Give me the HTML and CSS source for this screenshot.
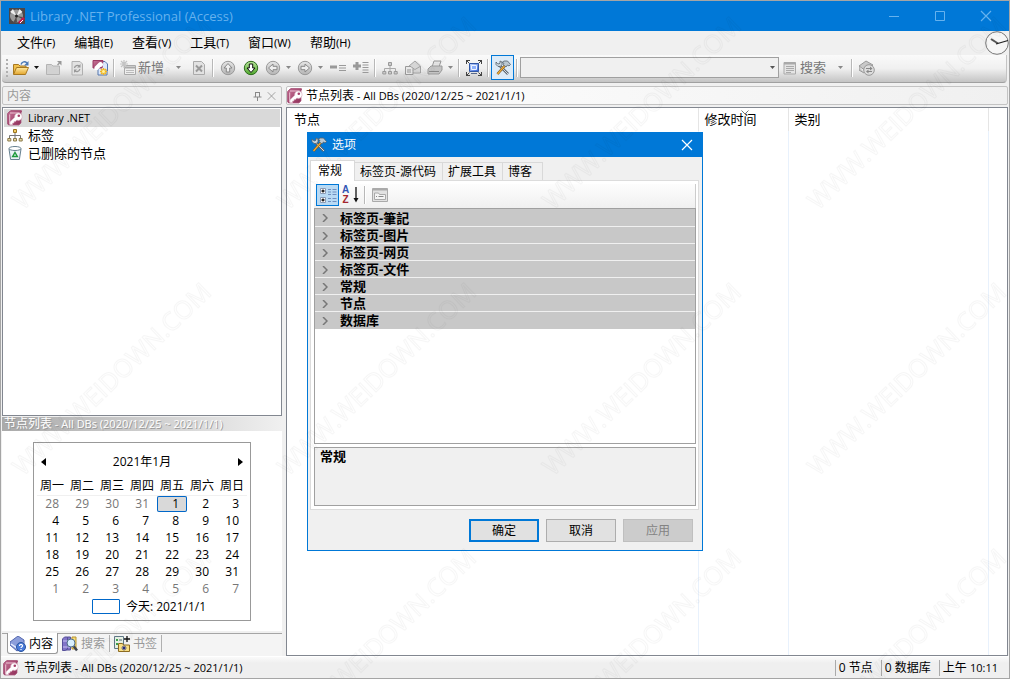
FILE: index.html
```html
<!DOCTYPE html>
<html lang="zh-CN">
<head>
<meta charset="utf-8">
<title>Library .NET Professional (Access)</title>
<link rel="stylesheet" href="styles.css">
</head>
<body>
<svg class="defs" aria-hidden="true">
  <defs>
    <linearGradient id="gold" x1="0" y1="0" x2="0" y2="1"><stop offset="0" stop-color="#ffe9a0"/><stop offset="1" stop-color="#e3a52c"/></linearGradient>
    <linearGradient id="plum" x1="0" y1="0" x2="1" y2="1"><stop offset="0" stop-color="#c9769a"/><stop offset="1" stop-color="#8d2c55"/></linearGradient>
    <linearGradient id="ball" x1="0" y1="0" x2="0" y2="1"><stop offset="0" stop-color="#e6e6e6"/><stop offset="1" stop-color="#b4b4b4"/></linearGradient>
    <linearGradient id="leaf" x1="0" y1="0" x2="0" y2="1"><stop offset="0" stop-color="#b9e59b"/><stop offset="1" stop-color="#4da62a"/></linearGradient>
    <linearGradient id="blue" x1="0" y1="0" x2="1" y2="1"><stop offset="0" stop-color="#c9dcff"/><stop offset="1" stop-color="#2f5fd8"/></linearGradient>
    <symbol id="i-key" viewBox="0 0 16 16">
      <path d="M3.500.800h11L13.800 3v10l-2 1.800H1.500L.8 14V3.500z" fill="url(#plum)" stroke="#9a3a64"/>
      <path d="M2.700 4.500V14M3 3h9.500" stroke="#e9c3d2"/>
      <path d="M11 3a3.700 3.700 0 1 1-1.200 7L8.500 11.500H7V13H5.500v1.800H2.800l.2-3 4.700-4.500A3.700 3.700 0 0 1 11 3z" fill="#fff" stroke="#d9aebf" stroke-width=".6"/>
      <circle cx="11.800" cy="5.800" r="1.300" fill="#a33d68"/>
    </symbol>
    <symbol id="i-tree" viewBox="0 0 16 16">
      <path d="M8 5v4M2.500 12V8.500h11V12M8 8v4" fill="none" stroke="#777"/>
      <path d="M6.500 2.500h3v3h-3z" fill="#f4cf63" stroke="#9a7420"/>
      <path d="M.8 11.500h3v2.500h-3zM6.500 11.500h3v2.500h-3zM12.200 11.500h3v2.500h-3z" fill="#e9dba8" stroke="#8a7a4a"/>
    </symbol>
    <symbol id="i-treegray" viewBox="0 0 16 16">
      <path d="M8 5v4M2.500 12V8.500h11V12M8 8v4" fill="none" stroke="#aaa"/>
      <path d="M6.500 2.500h3v3h-3zM.8 11.500h3v2.500h-3zM6.500 11.500h3v2.500h-3zM12.200 11.500h3v2.500h-3z" fill="#ccc" stroke="#999"/>
    </symbol>
    <symbol id="i-bin" viewBox="0 0 16 16">
      <path d="M2 4l1.600 10.500h8.800L14 4z" fill="#e9f1f5" stroke="#66808f"/>
      <ellipse cx="8" cy="3.500" rx="6" ry="2" fill="#fff" stroke="#66808f"/>
      <path d="M8 7.500l2.300 4H5.700z" fill="none" stroke="#1e9a3c" stroke-width="1.500"/>
    </symbol>
    <symbol id="i-open" viewBox="0 0 16 16">
      <path d="M.5 14V4.500h5L7 6h6v2" fill="#f0c04c" stroke="#a87820"/>
      <path d="M.5 14.500L3.500 7.500h12l-3 7z" fill="url(#gold)" stroke="#a87820"/>
      <path d="M8 4.500C9 1.500 12 1 14 3" fill="none" stroke="#4a78b4" stroke-width="1.400"/><path d="M15.500 1v4.500H11z" fill="#4a78b4"/>
    </symbol>
    <symbol id="i-folderup" viewBox="0 0 16 16">
      <path d="M.5 14V4.500h5L7 6h6.500v8.500H.5z" fill="#d2d2d2" stroke="#b4b4b4"/><path d="M11.500 5l2-2" stroke="#999" stroke-width="1.500"/><path d="M11 1h4.500v4.500z" fill="#999"/>
    </symbol>
    <symbol id="i-refresh" viewBox="0 0 16 16">
      <path d="M3 1.500h8l2.500 2.500v11H3z" fill="#e2e2e2" stroke="#b0b0b0"/><path d="M5.500 8a3 3 0 0 1 5-1.800M10.800 9a3 3 0 0 1-5 1.800" fill="none" stroke="#999" stroke-width="1.300"/><path d="M11.500 4v3.500H8zM5 13V9.500h3z" fill="#999"/>
    </symbol>
    <symbol id="i-pages" viewBox="0 0 16 16">
      <path d="M6 4.500h6.500L15 7v8H6z" fill="#dce8fb" stroke="#5577ad"/><path d="M9 1.500h4L15.500 4v7" fill="#dce8fb" stroke="#5577ad"/>
      <path d="M1 .5h10L10 8H1z" fill="url(#plum)" stroke="#9a3a64"/><path d="M2.500 10V7l4-4a2.500 2.500 0 1 1 2 4L5.500 10z" fill="#fff"/>
      <path d="M11.500 8v7M8 11.500h7M9 9l5 5M14 9l-5 5" stroke="#f2b51d" stroke-width="1.500"/><circle cx="11.500" cy="11.500" r="1.500" fill="#fff3a0"/>
    </symbol>
    <symbol id="i-new" viewBox="0 0 16 16">
      <path d="M4.500 5.500h11v9h-11z" fill="#eee" stroke="#aaa"/><path d="M5 7.500h10" stroke="#aaa" stroke-width="2"/><path d="M6 10.500h8M6 12.500h8" stroke="#bbb"/><path d="M4 0v8M0 4h8M1 1l6 6M7 1L1 7" stroke="#c4c4c4" stroke-width="1.200"/>
    </symbol>
    <symbol id="i-delete" viewBox="0 0 16 16">
      <path d="M2.500 1.500h8l3 3v10h-11z" fill="#e2e2e2" stroke="#aaa"/><path d="M5 5.500l6 6M11 5.500l-6 6" stroke="#999" stroke-width="2"/>
    </symbol>
    <symbol id="i-up" viewBox="0 0 16 16"><circle cx="8" cy="8" r="6.700" fill="url(#ball)" stroke="#999"/><path d="M8 3.500L12 8H9.700v4H6.300V8H4z" fill="#eee" stroke="#888"/></symbol>
    <symbol id="i-down" viewBox="0 0 16 16"><circle cx="8" cy="8" r="6.700" fill="url(#leaf)" stroke="#2d6b1c"/><path d="M8 12.500L4 8h2.300V4h3.400v4H12z" fill="#fff" stroke="#111"/></symbol>
    <symbol id="i-left" viewBox="0 0 16 16"><circle cx="8" cy="8" r="6.700" fill="url(#ball)" stroke="#999"/><path d="M3.500 8L8 4v2.300h4v3.400H8V12z" fill="#eee" stroke="#888"/></symbol>
    <symbol id="i-right" viewBox="0 0 16 16"><circle cx="8" cy="8" r="6.700" fill="url(#ball)" stroke="#999"/><path d="M12.500 8L8 4v2.300H4v3.400h4V12z" fill="#eee" stroke="#888"/></symbol>
    <symbol id="i-collapse" viewBox="0 0 16 16"><path d="M0 7h7" stroke="#999" stroke-width="3"/><path d="M9 5.500h7M9 8h7M9 10.500h7" stroke="#999"/></symbol>
    <symbol id="i-expand" viewBox="0 0 16 16"><path d="M0 6h8M4 2v8" stroke="#999" stroke-width="3"/><path d="M9.500 2.500h6M9.500 5h6M9.500 7.500h6M9.500 10h6M9.500 12.500h6" stroke="#999"/></symbol>
    <symbol id="i-mail" viewBox="0 0 16 16"><path d="M4 6l6-5 5.500 5v7H4z" fill="#d6d6d6" stroke="#a4a4a4"/><path d="M4.500 6.500l5.500 3 5-3" fill="none" stroke="#a4a4a4"/><path d="M.5 6.500H6L8 8.500v6H.5z" fill="#e8e8e8" stroke="#999"/><path d="M2 10h4M2 12h4" stroke="#999"/></symbol>
    <symbol id="i-print" viewBox="0 0 16 16"><path d="M5 7l2-6h7l-2 6z" fill="#e6e6e6" stroke="#999"/><path d="M1 9l3-3h11v4l-3 4H1z" fill="#c4c4c4" stroke="#999"/><path d="M2 11.500h10" stroke="#888"/></symbol>
    <symbol id="i-full" viewBox="0 0 16 16"><path d="M0 .5h4M.5 0v4M16 .5h-4M15.500 0v4M0 15.500h4M.5 16v-4M16 15.500h-4M15.500 16v-4M1 1l2.500 2.500M15 1l-2.500 2.500M1 15l2.500-2.500M15 15l-2.500-2.500" stroke="#444"/><path d="M3.500 3.500h9v8h-9z" fill="url(#blue)" stroke="#3157a5"/><path d="M5.500 5.500h5v4h-5z" fill="#8eb1fc" stroke="#eef4ff"/><path d="M5 13.500h6" stroke="#5a6b8c"/></symbol>
    <symbol id="i-tools" viewBox="0 0 16 16">
      <path d="M4 5l9 9" stroke="#606a73" stroke-width="2.600"/><path d="M4 5l9 9" stroke="#d4dde5"/>
      <path d="M1 2v2.500l2 2h2.500l1.500-2V2L5 1v2L4 4 2.500 3.500z" fill="#c7d3db" stroke="#57626b" stroke-width=".8"/>
      <path d="M10 5.500L2.500 14" stroke="#7c501a" stroke-width="2.600"/><path d="M10 5.500L2.500 14" stroke="#edae39" stroke-width="1.300"/>
      <path d="M7 2.500L9 1h3.500l3 3.500-1.500 1.500-1.500-1L11 7 8 4.500 9 3.300z" fill="#bac8d2" stroke="#53606b" stroke-width=".8"/>
    </symbol>
    <symbol id="i-form" viewBox="0 0 16 16"><path d="M2 2.500h11.500v11.500H2z" fill="#e4e4e4" stroke="#aaa"/><path d="M2 3.500h11.500" stroke="#aaa" stroke-width="2"/><path d="M4 6.500h8M4 8.500h8M4 10.500h8M4 12.500h5" stroke="#aaa"/></symbol>
    <symbol id="i-sync" viewBox="0 0 16 16"><path d="M0 6l7-5 7 4-7 6zM0 6v4l5 3" fill="#c9c9c9" stroke="#999"/><circle cx="10" cy="10" r="5.300" fill="#ddd" stroke="#999"/><path d="M7 8.500h5M13 11.500H8" stroke="#888"/><path d="M11 6.500l2.500 2-2.500 2zM9.500 9.500L7 11.500l2.500 2z" fill="#888"/></symbol>
    <symbol id="i-help" viewBox="0 0 16 16"><path d="M0 6l8-6 6 4v6l-7 5-7-6z" fill="#8c9edb" stroke="#5366ad"/><path d="M1 8l6 4 7-5" fill="none" stroke="#e7edff" stroke-width="1.500"/><circle cx="11" cy="11" r="4.500" fill="#4b7bd8" stroke="#29549f"/><path d="M9.500 10c0-2.300 3.200-2 3 0-.1 1-1.500.9-1.500 2M11 13v1" fill="none" stroke="#fff" stroke-width="1.200"/></symbol>
    <symbol id="i-find" viewBox="0 0 16 16"><path d="M.5 3l2-2h3v12l-2 1.500h-3zM5.500 1h3v13h-5" fill="#8275c8" stroke="#57509a"/><path d="M1 5h7M1 11h7" stroke="#cbc4f5"/><path d="M10 1h4v12h-4z" fill="#f5db75" stroke="#b79332"/><path d="M11.500 10l3.500 4.500" stroke="#404650" stroke-width="2.500"/><circle cx="9" cy="7" r="4" fill="#d8efff" stroke="#52708a"/></symbol>
    <symbol id="i-mark" viewBox="0 0 16 16"><path d="M.5.500h9v12h-9z" fill="#e8f2e5" stroke="#607888"/><path d="M2 3h2v2H2zM2 7h2v2H2z" fill="#3da34d"/><path d="M5 4h3M5 8h3" stroke="#567"/><path d="M13 0v6M10 3h6" stroke="#111" stroke-width="1.300"/><path d="M4.500 15.500v-8h4l1 1.500h6v6.500z" fill="#f8de84" stroke="#8d6b20"/><path d="M10 9.500v5M7.500 12h5M8.500 10.500l3 3M11.500 10.500l-3 3" stroke="#222c86"/></symbol>
    <symbol id="i-app" viewBox="0 0 16 16"><path d="M0 0h16v16H0z" fill="#4b4648"/><circle cx="7.500" cy="8" r="6.500" fill="#999"/><path d="M7.500 8L1 4l3-3zM7.500 8l3-7 3 3z" fill="#eee"/><path d="M7.500 8L4 15l4-.5zM7.500 8l6 1-.500 2z" fill="#554e50"/><circle cx="7.500" cy="8" r="1.500" fill="#222"/><path d="M10 15l5-5" stroke="#c4174d" stroke-width="2.500"/><path d="M11 15l3-3" stroke="#fff"/></symbol>
    <symbol id="i-cat" viewBox="0 0 18 16"><path d="M1.500 1.500h5v5h-5zM1.500 10.500h5v5h-5z" fill="#fff" stroke="#8a9ab5"/><path d="M2.500 4h3M4 2.500v3M2.500 13h3M4 11.500v3" stroke="#111" stroke-width="1.300"/><path d="M9 2.500h3M13.500 2.500h4M9 5h3M13.500 5h4M9 7.500h3M13.500 7.500h4M9 11.500h3M13.500 11.500h4M9 14.500h3M13.500 14.500h4" stroke="#6f8fc0"/></symbol>
    <symbol id="i-page" viewBox="0 0 16 16"><path d="M.5 1.500h15v13H.5z" fill="#e2e2e2" stroke="#aaa"/><path d="M1 2.500h14" stroke="#aaa" stroke-width="2"/><path d="M2.500 6h4l1 1.500h6v5h-11z" fill="#f4f4f4" stroke="#aaa"/><path d="M4 9.500h1M6.500 9.500h5" stroke="#888"/></symbol>
    <symbol id="i-caret" viewBox="0 0 5 3"><path d="M0 0h5L2.500 3z" fill="currentColor"/></symbol>
    <symbol id="i-close" viewBox="0 0 12 12"><path d="M1 1l10 10M11 1L1 11" stroke="currentColor" stroke-width="1.200" fill="none"/></symbol>
  </defs>
</svg>

<div class="window">
  <header class="titlebar">
    <svg class="icon"><use href="#i-app"/></svg>
    <h1 class="title">Library .NET Professional (Access)</h1>
    <button class="caption" aria-label="最小化"><svg class="glyph" viewBox="0 0 12 12"><path d="M1 6.500h10" stroke="currentColor"/></svg></button>
    <button class="caption" aria-label="最大化"><svg class="glyph" viewBox="0 0 12 12"><path d="M1.500 1.500h9v9h-9z" fill="none" stroke="currentColor"/></svg></button>
    <button class="caption" aria-label="关闭"><svg class="glyph"><use href="#i-close"/></svg></button>
  </header>

  <nav class="menubar">
    <button class="menu">文件<span class="key">(F)</span></button>
    <button class="menu">编辑<span class="key">(E)</span></button>
    <button class="menu">查看<span class="key">(V)</span></button>
    <button class="menu">工具<span class="key">(T)</span></button>
    <button class="menu">窗口<span class="key">(W)</span></button>
    <button class="menu">帮助<span class="key">(H)</span></button>
    <svg class="clock" viewBox="0 0 24 24"><circle cx="12" cy="12" r="11.300" fill="#f6f6f6" stroke="#777"/><path d="M6 8l7 4.500" stroke="#555" stroke-width="2"/><path d="M11 13l12-3.500" stroke="#222" stroke-width="1.300"/></svg>
  </nav>

  <div class="toolbar" role="toolbar">
    <span class="grip"></span>
    <button class="tool split" aria-label="打开"><svg class="icon"><use href="#i-open"/></svg><svg class="caret dark"><use href="#i-caret"/></svg></button>
    <button class="tool" aria-label="上级"><svg class="icon"><use href="#i-folderup"/></svg></button>
    <button class="tool" aria-label="刷新"><svg class="icon"><use href="#i-refresh"/></svg></button>
    <button class="tool" aria-label="新建数据库"><svg class="icon"><use href="#i-pages"/></svg></button>
    <span class="sep"></span>
    <button class="tool labelled"><svg class="icon"><use href="#i-new"/></svg><span class="word">新增</span><svg class="caret"><use href="#i-caret"/></svg></button>
    <button class="tool" aria-label="删除"><svg class="icon"><use href="#i-delete"/></svg></button>
    <span class="sep"></span>
    <button class="tool" aria-label="向上"><svg class="icon"><use href="#i-up"/></svg></button>
    <button class="tool" aria-label="向下"><svg class="icon"><use href="#i-down"/></svg></button>
    <button class="tool split" aria-label="后退"><svg class="icon"><use href="#i-left"/></svg><svg class="caret"><use href="#i-caret"/></svg></button>
    <button class="tool split" aria-label="前进"><svg class="icon"><use href="#i-right"/></svg><svg class="caret"><use href="#i-caret"/></svg></button>
    <button class="tool" aria-label="折叠"><svg class="icon"><use href="#i-collapse"/></svg></button>
    <button class="tool" aria-label="展开"><svg class="icon"><use href="#i-expand"/></svg></button>
    <span class="sep"></span>
    <button class="tool" aria-label="层级"><svg class="icon"><use href="#i-treegray"/></svg></button>
    <button class="tool" aria-label="发送"><svg class="icon"><use href="#i-mail"/></svg></button>
    <button class="tool split" aria-label="打印"><svg class="icon"><use href="#i-print"/></svg><svg class="caret"><use href="#i-caret"/></svg></button>
    <span class="sep"></span>
    <button class="tool" aria-label="全屏"><svg class="icon"><use href="#i-full"/></svg></button>
    <span class="sep"></span>
    <button class="tool pressed" aria-label="选项"><svg class="icon"><use href="#i-tools"/></svg></button>
    <span class="sep"></span>
    <span class="combo"><select class="select" aria-label="搜索内容"><option></option></select><svg class="caret"><use href="#i-caret"/></svg></span>
    <button class="tool labelled"><svg class="icon"><use href="#i-form"/></svg><span class="word">搜索</span><svg class="caret"><use href="#i-caret"/></svg></button>
    <span class="sep"></span>
    <button class="tool" aria-label="同步"><svg class="icon"><use href="#i-sync"/></svg></button>
  </div>

  <main class="body">
    <aside class="side">
      <div class="panehead muted">
        <span class="grow">内容</span>
        <button class="mini" aria-label="固定"><svg class="pin" viewBox="0 0 9 10"><path d="M2.500 1v5M6.500 1v5M2 1.500h5M.5 6h8M4.500 6v4" stroke="#888" fill="none"/></svg></button>
        <button class="mini" aria-label="关闭"><svg class="pin"><use href="#i-close"/></svg></button>
      </div>
      <ul class="tree">
        <li class="node current"><svg class="icon"><use href="#i-key"/></svg><span class="latin">Library .NET</span></li>
        <li class="node"><svg class="icon"><use href="#i-tree"/></svg>标签</li>
        <li class="node"><svg class="icon"><use href="#i-bin"/></svg>已删除的节点</li>
      </ul>
      <h2 class="calhead">节点列表<span class="latin"> - All DBs (2020/12/25 ~ 2021/1/1)</span></h2>
      <div class="calwrap">
        <div class="cal">
          <div class="month">
            <button class="arrow" aria-label="上个月"><svg class="tri" viewBox="0 0 5 8"><path d="M5 0v8L0 4z"/></svg></button>
            <span>2021年1月</span>
            <button class="arrow" aria-label="下个月"><svg class="tri" viewBox="0 0 5 8"><path d="M0 0v8l5-4z"/></svg></button>
          </div>
          <table class="days">
            <thead><tr><th>周一</th><th>周二</th><th>周三</th><th>周四</th><th>周五</th><th>周六</th><th>周日</th></tr></thead>
            <tbody>
              <tr><td class="dim">28</td><td class="dim">29</td><td class="dim">30</td><td class="dim">31</td><td class="today">1</td><td>2</td><td>3</td></tr>
              <tr><td>4</td><td>5</td><td>6</td><td>7</td><td>8</td><td>9</td><td>10</td></tr>
              <tr><td>11</td><td>12</td><td>13</td><td>14</td><td>15</td><td>16</td><td>17</td></tr>
              <tr><td>18</td><td>19</td><td>20</td><td>21</td><td>22</td><td>23</td><td>24</td></tr>
              <tr><td>25</td><td>26</td><td>27</td><td>28</td><td>29</td><td>30</td><td>31</td></tr>
              <tr><td class="dim">1</td><td class="dim">2</td><td class="dim">3</td><td class="dim">4</td><td class="dim">5</td><td class="dim">6</td><td class="dim">7</td></tr>
            </tbody>
          </table>
          <div class="now"><span class="swatch"></span>今天: 2021/1/1</div>
        </div>
      </div>
      <div class="sidetabs" role="tablist">
        <button class="sidetab active" role="tab" aria-selected="true"><svg class="icon"><use href="#i-help"/></svg>内容</button>
        <button class="sidetab" role="tab"><svg class="icon"><use href="#i-find"/></svg>搜索</button>
        <button class="sidetab" role="tab"><svg class="icon"><use href="#i-mark"/></svg>书签</button>
      </div>
    </aside>

    <section class="content">
      <div class="panehead bright"><svg class="icon"><use href="#i-key"/></svg><span class="grow">节点列表<span class="latin"> - All DBs (2020/12/25 ~ 2021/1/1)</span></span></div>
      <div class="listbox">
        <table class="list">
          <thead><tr><th>节点</th><th class="c-time">修改时间<svg class="sort" viewBox="0 0 8 5"><path d="M.5.500L4 4 7.500.500" fill="none" stroke="#777"/></svg></th><th class="c-kind">类别</th><th class="c-rest"></th></tr></thead>
          <tbody><tr><td></td><td></td><td></td><td></td></tr></tbody>
        </table>
      </div>
    </section>
  </main>

  <footer class="status">
    <svg class="icon"><use href="#i-key"/></svg>
    <span class="grow">节点列表<span class="latin"> - All DBs (2020/12/25 ~ 2021/1/1)</span></span>
    <span class="cell">0 节点</span>
    <span class="cell">0 数据库</span>
    <span class="cell last">上午 <span class="latin">10:11</span></span>
  </footer>

  <div class="dialog" role="dialog" aria-labelledby="dlg-title">
    <div class="dlghead">
      <svg class="icon"><use href="#i-tools"/></svg>
      <h2 class="dlgtitle" id="dlg-title">选项</h2>
      <button class="dlgclose" aria-label="关闭"><svg class="glyph"><use href="#i-close"/></svg></button>
    </div>
    <div class="dlgbody">
      <div class="tabs" role="tablist">
        <button class="tab active" role="tab" aria-selected="true">常规</button>
        <button class="tab" role="tab">标签页-源代码</button>
        <button class="tab" role="tab">扩展工具</button>
        <button class="tab" role="tab">博客</button>
      </div>
      <div class="page" role="tabpanel">
        <div class="gridbar">
          <button class="gridtool on" aria-label="按分类"><svg class="wide"><use href="#i-cat"/></svg></button>
          <button class="gridtool az" aria-label="按字母"><span class="letters"><span>A</span><span class="z">Z</span></span><svg class="down" viewBox="0 0 6 16"><path d="M3 0v13" stroke="#111" stroke-width="1.300"/><path d="M.5 11h5L3 15.500z" fill="#111"/></svg></button>
          <span class="sep"></span>
          <button class="gridtool" aria-label="属性页"><svg class="icon"><use href="#i-page"/></svg></button>
        </div>
        <ul class="props">
          <li class="prop">标签页-筆記</li>
          <li class="prop">标签页-图片</li>
          <li class="prop">标签页-网页</li>
          <li class="prop">标签页-文件</li>
          <li class="prop">常规</li>
          <li class="prop">节点</li>
          <li class="prop">数据库</li>
        </ul>
        <div class="desc">常规</div>
      </div>
      <div class="actions">
        <button class="btn primary">确定</button>
        <button class="btn">取消</button>
        <button class="btn" disabled>应用</button>
      </div>
    </div>
  </div>

  <svg class="watermark" aria-hidden="true">
    <defs>
      <pattern id="mark" width="265" height="266" patternUnits="userSpaceOnUse">
        <text class="marktext" transform="translate(22 210) rotate(-44)">WWW.WEIDOWN.COM</text>
      </pattern>
    </defs>
    <rect width="100%" height="100%" fill="url(#mark)"/>
  </svg>
</div>
</body>
</html>
```

FILE: styles.css
```css
* { box-sizing: border-box; }

body {
  margin: 0;
  background: #f0f0f0;
  color: #000;
  font: 12px/16px "Open Sans", "Noto Sans CJK SC", sans-serif;
}

button {
  margin: 0;
  padding: 0;
  border: 0;
  background: none;
  color: inherit;
  font: inherit;
  white-space: nowrap;
}

h1, h2 { margin: 0; font: inherit; }
ul { margin: 0; padding: 0; list-style: none; }
svg { display: block; flex: none; }

.defs { position: absolute; width: 0; height: 0; }
.icon { width: 16px; height: 16px; }
.glyph { width: 12px; height: 12px; }
.grow { flex: 1; }
.latin { font-size: 11px; }

.window {
  position: relative;
  display: flex;
  flex-direction: column;
  height: 100vh;
  border: 1px solid #a5a5a5;
  overflow: hidden;
}

/* Title bar */
.titlebar {
  display: flex;
  align-items: center;
  height: 30px;
  padding-left: 8px;
  background: #0078d7;
  color: #66b2ee;
}
.title { flex: 1; padding-left: 5px; font-size: 13px; }
.caption { display: grid; place-items: center; width: 46px; height: 30px; }

/* Menu */
.menubar {
  display: flex;
  align-items: center;
  height: 24px;
  padding-left: 6px;
}
.menu { height: 24px; padding: 0 9px 2px 10px; font-size: 13px; }
.key { font-family: "Noto Sans", sans-serif; font-size: 11px; }
.clock { width: 24px; height: 24px; margin-left: auto; }

/* Toolbar */
.toolbar {
  display: flex;
  align-items: center;
  height: 28px;
  margin: 0 2px 3px 1px;
  padding: 0 0 2px 4px;
  border-bottom: 1px solid #a0a0a0;
  border-right: 1px solid #c4c4c4;
  border-radius: 0 0 4px 4px;
  background: linear-gradient(#fafafa, #f0f0f0 50%, #c4c4c4);
  color: #777;
}
.grip {
  width: 2px;
  height: 18px;
  margin-right: 2px;
  background: repeating-linear-gradient(#b0b0b0 0 2px, transparent 2px 4px);
}
.tool {
  display: flex;
  align-items: center;
  justify-content: center;
  width: 23px;
  height: 25px;
  border: 1px solid transparent;
}
.tool.split { width: 32px; justify-content: space-between; padding: 0 2px; }
.tool.labelled { width: 70px; justify-content: flex-start; padding-left: 2px; }
.tool.pressed { border-color: #0078d7; background: #dcebf8; }
.word { margin-left: 2px; padding-bottom: 1px; font-size: 13px; }
.caret { width: 5px; height: 3px; color: #888; }
.labelled .caret { margin-left: 12px; }
.caret.dark { color: #111; }
.sep { width: 6px; height: 18px; flex: none; background: linear-gradient(90deg, transparent 2px, #b8b8b8 2px 3px, #fff 3px 4px, transparent 4px); }
.combo { position: relative; display: flex; align-items: center; width: 259px; height: 21px; }
.select {
  appearance: none;
  width: 100%;
  height: 100%;
  border: 1px solid #a0a0a0;
  border-radius: 0;
  background: #f0f0f0;
}
.combo .caret { position: absolute; right: 4px; color: #555; }

/* Main columns */
.body {
  display: grid;
  grid-template-columns: 280px 1fr;
  gap: 4px;
  flex: 1;
  min-height: 0;
  padding: 0 1px 0 1px;
}
.side, .content { display: flex; flex-direction: column; min-width: 0; min-height: 0; }
.panehead {
  display: flex;
  align-items: center;
  height: 19px;
  margin-bottom: 2px;
  border: 1px solid #c3c3c3;
  border-radius: 2px;
  flex: none;
}
.panehead.muted { padding: 0 5px 0 4px; color: #999; }
.panehead.bright { gap: 3px; background: linear-gradient(90deg, #fff, #f0f0f0); }
.mini { margin-left: 5px; }
.pin { width: 9px; height: 10px; color: #999; }

.tree { flex: 1; padding: 1px; border: 1px solid #828790; background: #fff; }
.node { display: flex; align-items: center; gap: 5px; height: 18px; padding: 0 0 2px 3px; font-size: 13px; }
.node.current { padding-bottom: 0; background: #d9d9d9; }

/* Calendar */
.calhead {
  height: 14px;
  margin-top: 1px;
  padding-left: 2px;
  background: linear-gradient(90deg, #aaa, #f0f0f0);
  color: #fff;
  line-height: 14px;
  text-shadow: 1px 1px 0 #999;
  white-space: nowrap;
}
.calwrap { height: 200px; padding: 11px 31px; background: #fff; flex: none; }
.cal { padding: 9px 3px 4px; border: 1px solid #999; }
.month { display: flex; justify-content: space-between; align-items: center; height: 20px; padding: 0 2px; }
.arrow { padding: 2px; }
.tri { width: 5px; height: 8px; }
.days { width: 100%; border-collapse: collapse; table-layout: fixed; }
.days th { height: 23px; padding: 5px 0 0; border-bottom: 1px solid #f0f0f0; font-weight: normal; white-space: nowrap; }
.days td { height: 17px; padding: 0 8px 0 0; line-height: 15px; text-align: right; }
.days .dim { color: #777; }
.days .today { background: #d9d9d9; border-radius: 2px; box-shadow: inset 0 0 0 1px #0067c9; }
.now { display: flex; align-items: center; justify-content: center; gap: 6px; height: 19px; padding-left: 14px; }
.swatch { width: 28px; height: 15px; border: 1px solid #0067c9; border-radius: 1px; }

/* Side tabs */
.sidetabs { display: flex; height: 25px; padding-left: 5px; border-top: 2px solid #f0f0f0; flex: none; color: #999; background: linear-gradient(#a5a5a5 1px, #f4f4f4 1px); }
.sidetab { display: flex; align-items: center; gap: 3px; height: 21px; padding: 1px 4px 0 2px; border-right: 1px solid #b0b0b0; }
.sidetab + .sidetab { height: 17px; margin: 2px 0 0; padding: 0 4px; }
.sidetab.active { border: 1px solid #999; border-top: 0; border-radius: 0 0 3px 3px; background: #fff; color: #000; }

/* Node list */
.listbox { flex: 1; border: 1px solid #828790; background: #fff; }
.list { width: 100%; height: 100%; border-collapse: collapse; table-layout: fixed; }
.list th { position: relative; height: 23px; padding: 0 7px 2px; border-right: 1px solid #e5e5e5; font-size: 13px; font-weight: normal; text-align: left; }
.list td { border-right: 1px solid #e8f1fc; }
.list th:nth-child(2), .list th:nth-child(3) { padding-left: 6px; }
.list th:last-child, .list td:last-child { border-right: 0; }
.c-time { width: 90px; }
.c-kind { width: 200px; }
.c-rest { width: 19px; }
.sort { position: absolute; top: 2px; left: 42px; width: 8px; height: 5px; }

/* Status bar */
.status { display: flex; align-items: center; height: 22px; padding: 0 8px 0 2px; border-top: 1px solid #fff; background: linear-gradient(#fafafa, #efefef 6px); }
.status .grow { padding-left: 5px; }
.cell { padding: 0 8px 0 3px; border-left: 1px solid #aaa; white-space: nowrap; }
.cell.last { padding-right: 3px; }

/* Options dialog */
.dialog {
  position: absolute;
  top: 131px;
  left: 306px;
  width: 396px;
  border: 1px solid #0078d7;
  background: #f0f0f0;
}
.dlghead { display: flex; align-items: center; height: 24px; padding-left: 3px; background: #0078d7; color: #fff; }
.dlgtitle { flex: 1; padding-left: 5px; }
.dlgclose { display: grid; place-items: center; width: 30px; height: 24px; }
.dlgbody { padding: 3px 3px 8px 2px; }
.tabs { display: flex; align-items: flex-end; height: 20px; }
.tab { height: 18px; padding: 0 6px 0 5px; border: 1px solid #d9d9d9; border-left: 0; border-bottom: 0; line-height: 18px; }
.tab:last-child { padding-right: 10px; }
.tab.active { z-index: 1; height: 21px; margin-bottom: -1px; padding: 0 12px 0 7px; border-left: 1px solid #d9d9d9; background: #fff; }
.page { padding: 3px 2px 3px 3px; border: 1px solid #dcdcdc; background: #fff; }
.gridbar { display: flex; align-items: center; height: 24px; padding: 0 0 2px 2px; border-right: 1px solid #ccc; background: linear-gradient(#fdfdfd, #f0f0f0); }
.gridtool { display: flex; align-items: center; justify-content: center; width: 23px; height: 22px; border: 1px solid transparent; }
.gridtool.on { border-color: #0078d7; background: #b9daf4; }
.gridtool.az { gap: 4px; }
.wide { width: 18px; height: 16px; }
.letters { display: grid; color: #3155b5; font: bold 10px/10px "Liberation Sans", sans-serif; }
.z { color: #a3262e; }
.down { width: 6px; height: 16px; }
.props { height: 236px; border: 1px solid #a0a0a0; background: #fff; }
.prop {
  height: 17px;
  padding-left: 25px;
  border-bottom: 1px solid #f0f0f0;
  background: #c8c8c8 url("data:image/svg+xml,%3Csvg xmlns='http://www.w3.org/2000/svg' width='6' height='8'%3E%3Cpath d='M1 0l4 4-4 4' fill='none' stroke='%23777' stroke-width='1.500'/%3E%3C/svg%3E") no-repeat 7px 5px;
  font-size: 13px;
  font-weight: bold;
}
.prop:first-child { height: 18px; padding-top: 1px; }
.prop:last-child { border-bottom-color: #c8c8c8; }
.desc { height: 59px; margin-top: 3px; padding: 0 5px; border: 1px solid #a0a0a0; background: #f0f0f0; font-size: 13px; font-weight: bold; }
.actions { display: flex; justify-content: flex-end; gap: 7px; padding: 9px 6px 0 0; }
.btn { width: 70px; height: 23px; border: 1px solid #adadad; background: #e1e1e1; }
.btn.primary { border: 2px solid #0078d7; }
.btn:disabled { border-color: #bfbfbf; background: #ccc; color: #838383; }

/* Watermark */
.watermark { position: absolute; inset: 0; width: 100%; height: 100%; pointer-events: none; }
.marktext { fill: none; stroke: #000; stroke-opacity: .035; font: 25px "Open Sans", sans-serif; }
```
